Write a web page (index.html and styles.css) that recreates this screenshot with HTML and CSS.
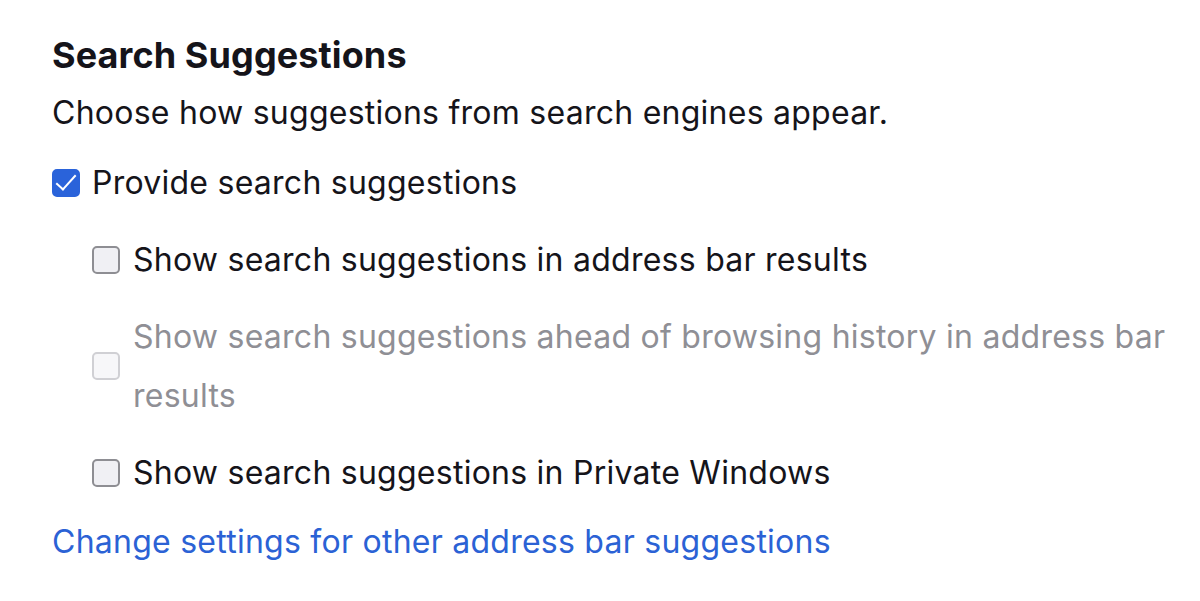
FILE: index.html
```html
<!DOCTYPE html>
<html lang="en">
<head>
  <meta charset="UTF-8" />
  <title>Search Suggestions</title>
  <link rel="stylesheet" href="styles.css">
</head>
<body>
  <section class="pref-group">
    <h2>Search Suggestions</h2>
    <p class="description">Choose how suggestions from search engines appear.</p>

    <label class="check-row">
      <input type="checkbox" checked>
      <span>Provide search suggestions</span>
    </label>

    <div class="nested">
      <label class="check-row">
        <input type="checkbox">
        <span>Show search suggestions in address bar results</span>
      </label>
      <label class="check-row disabled">
        <input type="checkbox" disabled>
        <span>Show search suggestions ahead of browsing history in address bar results</span>
      </label>
      <label class="check-row">
        <input type="checkbox">
        <span>Show search suggestions in Private Windows</span>
      </label>
    </div>

    <a href="#" class="link">Change settings for other address bar suggestions</a>
  </section>
</body>
</html>
```

FILE: styles.css
```css
body {
  margin: 0;
  padding: 0 30px 0 52px;
  font-family: Inter, 'Noto Sans', sans-serif;
  color: #15141a;
  background: #ffffff;
  letter-spacing: 0.25px;
}

h2 {
  margin: 0;
  padding-top: 35px;
  font-size: 36px;
  font-weight: 700;
  line-height: 40px;
  letter-spacing: 0.1px;
}

.description {
  margin: 0;
  padding-top: 8px;
  font-size: 32px;
  line-height: 59px;
}

.check-row {
  display: flex;
  align-items: center;
  gap: 12px;
  margin-top: 11px;
  font-size: 32px;
  line-height: 59px;
}

.nested {
  padding-left: 40px;
}

.nested .check-row {
  margin-top: 18px;
  gap: 13px;
}

.check-row input[type="checkbox"] {
  appearance: none;
  flex: none;
  width: 28px;
  height: 28px;
  margin: 0;
  border: 2px solid #8e8e93;
  border-radius: 5px;
  background: #f0f0f4;
  position: relative;
}

.check-row input[type="checkbox"]:checked {
  background: #2a63da;
  border-color: #2a63da;
}

.check-row input[type="checkbox"]:checked::after {
  content: '';
  position: absolute;
  left: 7px;
  top: -1px;
  width: 8px;
  height: 18px;
  border: solid #ffffff;
  border-width: 0 2px 2px 0;
  transform: rotate(42deg);
}

.check-row.disabled {
  color: #8f8f95;
}

.check-row input[type="checkbox"]:disabled {
  border-color: #d0d0d4;
  background: #f7f7f9;
}

.link {
  display: block;
  margin-top: 10px;
  font-size: 32px;
  line-height: 59px;
  color: #2b62d5;
  text-decoration: none;
}
```
